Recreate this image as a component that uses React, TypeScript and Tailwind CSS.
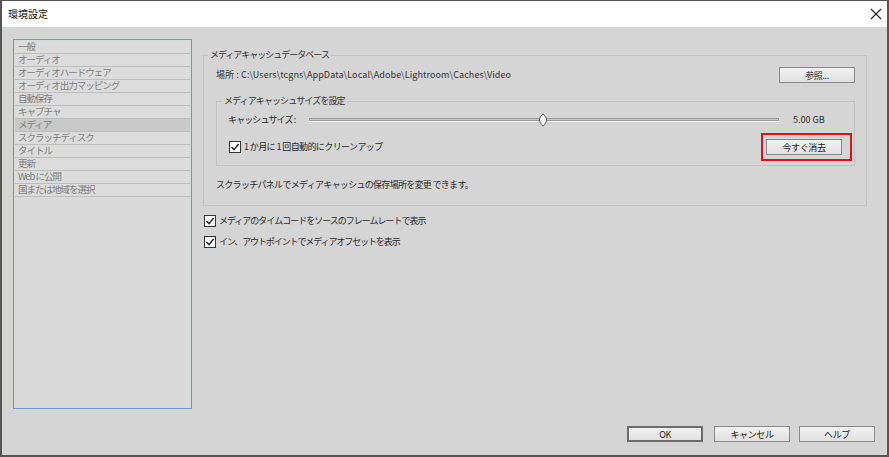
import React from "react";

const categories = [
  "一般",
  "オーディオ",
  "オーディオハードウェア",
  "オーディオ出力マッピング",
  "自動保存",
  "キャプチャ",
  "メディア",
  "スクラッチディスク",
  "タイトル",
  "更新",
  "Web に公開",
  "国または地域を選択",
];

function CheckBox() {
  return (
    <svg width="12" height="12" viewBox="0 0 12 12" className="shrink-0">
      <rect x="0.5" y="0.5" width="11" height="11" fill="#fff" stroke="#333" />
      <path d="M2.5 6 L5 8.6 L9.6 3" fill="none" stroke="#222" strokeWidth="1.4" />
    </svg>
  );
}

function Button({ label, isDefault = false, className = "" }: { label: string; isDefault?: boolean; className?: string }) {
  return (
    <button
      className={`flex h-[16px] w-[76px] items-center justify-center bg-gradient-to-b from-[#f2f2f2] to-[#e1e1e1] text-[9px] leading-none tracking-[-0.4px] text-[#222] ${
        isDefault ? "border-2 border-[#6b6b6b]" : "border border-[#8a8a8a]"
      } ${className}`}
    >
      {label}
    </button>
  );
}

function Slider() {
  return (
    <div className="relative h-[14px] w-[470px] shrink-0">
      <div className="absolute left-0 right-0 top-[5px] h-[3px] border border-[#9a9a9a] bg-[#c9c9c9]" />
      <div className="absolute left-0 right-0 top-[8px] h-px bg-white" />
      <svg width="10" height="14" viewBox="0 0 10 14" className="absolute left-[229px] top-0">
        <path d="M5 0.8 C7.5 3.5 8.6 5.5 8.6 7 C8.6 8.5 7.5 10.5 5 13.2 C2.5 10.5 1.4 8.5 1.4 7 C1.4 5.5 2.5 3.5 5 0.8 Z" fill="#f7f7f7" stroke="#555" strokeWidth="1" />
      </svg>
    </div>
  );
}

export default function App() {
  return (
    <div className="flex h-[457px] w-[889px] flex-col border-x-2 border-b-2 border-t border-[#555] bg-[#d5d5d5] font-['Noto_Sans_CJK_JP','Noto_Sans',sans-serif] text-[#2a2a2a]">
      <div className="flex h-[26px] shrink-0 items-center justify-between bg-white pl-[6px] pr-[4px]">
        <span className="text-[10px] leading-none text-[#111]">環境設定</span>
        <svg width="12" height="12" viewBox="0 0 12 12" className="mr-[1px]">
          <path d="M1 1 L11 11 M11 1 L1 11" stroke="#222" strokeWidth="1.1" />
        </svg>
      </div>

      <div className="flex flex-1 flex-col">
        <div className="flex">
          <div className="ml-[11px] mt-[12px] h-[370px] w-[179px] border border-[#6f97bd] bg-[#dadada] p-px">
            {categories.map((c) => (
              <div
                key={c}
                className={`flex h-[13px] items-center border-b border-[#bdbdbd] pl-[3px] text-[9.5px] leading-none tracking-[-1px] text-[#7c7c7c] ${
                  c === "メディア" ? "bg-[#c9c9c9]" : "bg-[#dcdcdc]"
                }`}
              >
                {c}
              </div>
            ))}
          </div>

          <div className="ml-[11px] mt-[21px] w-[664px] text-[9px] tracking-[-0.6px]">
            <fieldset className="border border-[#c2c2c2]">
              <legend className="ml-[4px] px-[2px] leading-[14px] tracking-[-1px] text-[#333]">メディアキャッシュデータベース</legend>
              <div className="mt-[5px] flex h-[16px] items-center justify-between pl-[12px] pr-[11px]">
                <span className="whitespace-pre tracking-[0.1px] text-[#333]">
                  場所 : C:\Users\tcgns\AppData\Local\Adobe\Lightroom\Caches\Video
                </span>
                <Button label="参照..." />
              </div>

              <fieldset className="ml-[12px] mr-[11px] mt-[11px] border border-[#c2c2c2] pb-[4px]">
                <legend className="ml-[5px] px-[2px] leading-[14px] tracking-[-0.9px] text-[#333]">メディアキャッシュサイズを設定</legend>
                <div className="mt-[5px] flex h-[14px] items-center pl-[11px]">
                  <span className="w-[81px] shrink-0 whitespace-pre tracking-[-0.9px]">キャッシュサイズ :</span>
                  <Slider />
                  <span className="ml-[14px] tracking-[0px]">5.00 GB</span>
                </div>
                <div className="mt-[6px] flex h-[28px] items-center pl-[12px]">
                  <CheckBox />
                  <span className="ml-[3px] whitespace-pre">1 か月に 1 回自動的にクリーンアップ</span>
                  <div className="ml-auto mr-[2px] flex h-[28px] w-[91px] items-center border-2 border-[#e3101b] pl-[3px]">
                    <Button label="今すぐ消去" />
                  </div>
                </div>
              </fieldset>

              <div className="mt-[12px] flex h-[14px] items-center pl-[12px] tracking-[-0.7px]">
                スクラッチパネルでメディアキャッシュの保存場所を変更 できます。
              </div>
              <div className="h-[13px]" />
            </fieldset>

            <div className="mt-[8px] flex h-[14px] items-center pl-px">
              <CheckBox />
              <span className="ml-[3px] tracking-[-1px]">メディアのタイムコードをソースのフレームレートで表示</span>
            </div>
            <div className="mt-[7px] flex h-[14px] items-center pl-px">
              <CheckBox />
              <span className="ml-[3px] tracking-[-1.1px]">イン、アウトポイントでメディアオフセットを表示</span>
            </div>
          </div>
        </div>

        <div className="mb-[13px] mt-auto flex justify-end pr-[12px]">
          <Button label="OK" isDefault />
          <Button label="キャンセル" className="ml-[11px]" />
          <Button label="ヘルプ" className="ml-[9px]" />
        </div>
      </div>
    </div>
  );
}
